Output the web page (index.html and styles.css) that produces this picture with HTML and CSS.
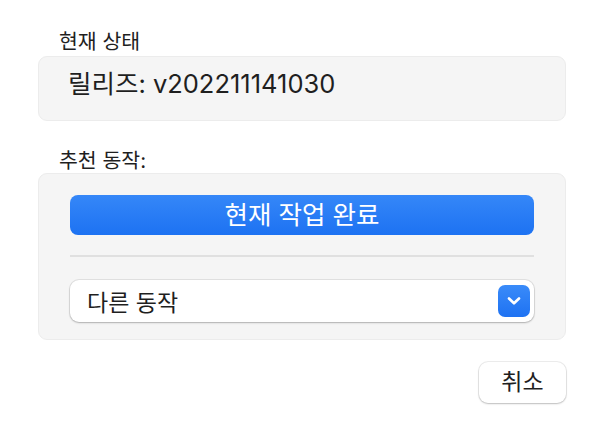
FILE: index.html
```html
<!DOCTYPE html>
<html lang="ko">
<head>
<meta charset="utf-8">
<link rel="stylesheet" href="styles.css">
</head>
<body>
<div class="dialog">
  <div class="label">현재 상태</div>
  <div class="panel status">
    <div class="status-text">릴리즈: v202211141030</div>
  </div>
  <div class="label label2">추천 동작:</div>
  <div class="panel actions">
    <button class="primary">현재 작업 완료</button>
    <div class="sep"></div>
    <div class="select">
      <span>다른 동작</span>
      <span class="chev"><svg width="16" height="10" viewBox="0 0 16 10"><path d="M3 2.5 L8 7.3 L13 2.5" fill="none" stroke="#fff" stroke-width="2.6" stroke-linecap="round" stroke-linejoin="round"/></svg></span>
    </div>
  </div>
  <div class="footer">
    <button class="cancel">취소</button>
  </div>
</div>
</body>
</html>
```
FILE: styles.css
```css
* { box-sizing: border-box; }
html, body { margin: 0; background: #fff; }
body {
  font-family: Inter, "Noto Sans CJK KR", sans-serif;
  color: #1f1f1f;
  width: 602px;
  height: 432px;
  overflow: hidden;
}
.dialog {
  display: flex;
  flex-direction: column;
  padding: 30px 36px 0 38px;
}
.label {
  font-size: 20.5px;
  line-height: 24px;
  padding-left: 21px;
  margin-bottom: 2px;
  color: #1f1f1f;
}
.label2 { margin-top: 28px; margin-bottom: 0; }
.panel {
  background: #f5f5f5;
  border: 1px solid #ececec;
  border-radius: 9px;
}
.status {
  height: 65px;
  padding: 11px 0 0 29px;
}
.status-text {
  font-size: 25.5px;
  line-height: 32px;
  color: #1f1f1f;
}
.actions {
  height: 167px;
  padding: 21px 31px 0 31px;
  display: flex;
  flex-direction: column;
}
.primary {
  height: 40px;
  border: none;
  border-radius: 8px;
  background: linear-gradient(#3587f8, #1d72f2);
  color: #fff;
  font-family: inherit;
  font-size: 25.5px;
  line-height: 40px;
  padding: 0;
}
.sep {
  height: 2px;
  background: #e0e0e0;
  margin-top: 20px;
}
.select {
  margin-top: 23px;
  height: 42px;
  background: #fff;
  border-radius: 9px;
  box-shadow: 0 0 0 1px rgba(0,0,0,0.08), 0 1px 2px rgba(0,0,0,0.22);
  display: flex;
  align-items: center;
  justify-content: space-between;
  padding: 0 4px 0 17px;
  font-size: 23px;
}
.chev {
  width: 32px;
  height: 32px;
  border-radius: 7px;
  background: linear-gradient(#3a8bf9, #1e72f2);
  display: flex;
  align-items: center;
  justify-content: center;
}
.footer {
  display: flex;
  justify-content: flex-end;
  margin-top: 22px;
}
.cancel {
  width: 87px;
  height: 41px;
  background: #fff;
  border: none;
  border-radius: 9px;
  box-shadow: 0 0 0 1px rgba(0,0,0,0.07), 0 1px 2px rgba(0,0,0,0.2);
  font-family: inherit;
  font-size: 23px;
  line-height: 41px;
  color: #1f1f1f;
  padding: 0;
}
```
